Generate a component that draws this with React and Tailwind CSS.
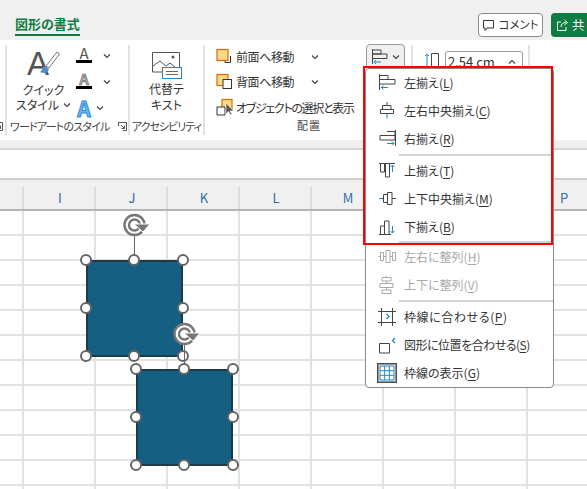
const FONT = "font-['Noto_Sans_CJK_JP','Liberation_Sans',sans-serif] [font-feature-settings:'palt']";
const D = "#444";
const B = "#1f88d0";

function Chev({ className = "" }) {
  return (
    <svg width="8" height="6" viewBox="0 0 8 6" className={className} fill="none" stroke="#444" strokeWidth="1.2">
      <path d="M1 1.5 4 4.5 7 1.5" />
    </svg>
  );
}

function Ico({ children }) {
  return (
    <svg width="20" height="20" viewBox="0 0 20 20" fill="none" stroke={D} strokeWidth="1" className="shrink-0">
      {children}
    </svg>
  );
}

const icons = {
  left: (
    <Ico>
      <path d="M2.500 1v16M3 2.500h8v4H3M3 6.500h15v4.500H3" />
      <path d="M4 14.500h7M6.500 12.500 4.500 14.500l2 2" stroke={B} />
    </Ico>
  ),
  center: (
    <Ico>
      <path d="M10 1v3M5.500 4.500h8.500v4H5.500zM3.500 8.500h13v4h-13z" />
      <path d="M10 13v4.500" stroke={B} />
    </Ico>
  ),
  right: (
    <Ico>
      <path d="M18.500 1v16M10 2.500h8v4h-8M3 6.500h15V11H3z" />
      <path d="M10 14.500h7M15 12.500l2 2-2 2" stroke={B} />
    </Ico>
  ),
  top: (
    <Ico>
      <path d="M2 2.500h16M3.500 3v8h4V3M8.500 3v13h4V3" />
      <path d="M15.500 11V4M13.500 6l2-2 2 2" stroke={B} />
    </Ico>
  ),
  middle: (
    <Ico>
      <path d="M5 9.500h1M10 9.500h1M15 9.500h4M6.500 5.500h4v8h-4zM10.500 3.500h4.500v12h-4.500z" />
      <path d="M2 9.500h3" stroke={B} />
    </Ico>
  ),
  bottom: (
    <Ico>
      <path d="M2 17.500h12M3.500 17v-8h4v8M7.500 17V4h4.500v13" />
      <path d="M15.500 9v7M13.500 14l2 2 2-2" stroke={B} />
    </Ico>
  ),
  distH: (
    <Ico>
      <g stroke="#a8a8a8">
        <path d="M3.500 5.500h3v8h-3zM9 3.500h4v12H9zM15.500 5.500h3v8h-3zM1.500 9.500h2M6.500 9.500H9M13 9.500h2.500" />
      </g>
    </Ico>
  ),
  distV: (
    <Ico>
      <g stroke="#a8a8a8">
        <path d="M5 2.500h9v3.500H5zM3 8.500h13v4H3zM5 15h9v3.500H5zM9.500 1v1.500M9.500 6v2.500M9.500 12.500V15" />
      </g>
    </Ico>
  ),
  snapGrid: (
    <Ico>
      <path d="M4.500 1v18M15.500 1v18M1 4.500h18M1 15.500h18" />
      <path d="M9.500 7l2.500 2.500L9.500 12" stroke={B} strokeWidth="1.3" />
    </Ico>
  ),
  snapShape: (
    <Ico>
      <path d="M2.500 8.500h10v9.500h-10z" />
      <path d="M18 3l-2.500 2.500L18 8" stroke={B} strokeWidth="1.3" />
    </Ico>
  ),
  grid: (
    <svg width="20" height="20" viewBox="0 0 20 20" fill="none" className="shrink-0">
      <rect x="0.500" y="0.500" width="19" height="19" fill="#fff" stroke="#444" />
      <rect x="1.500" y="1.500" width="17" height="17" stroke="#999" strokeWidth="1.2" />
      <path d="M3 3h14v14H3zM3 7.700h14M3 12.300h14M7.700 3v14M12.300 3v14" stroke={B} />
    </svg>
  ),
};

function Item({ icon, label, k, disabled, track = "" }) {
  return (
    <div className={`flex items-center h-[28px] pl-[11px] gap-[7px] text-[12px] whitespace-nowrap ${disabled ? "text-[#a9a9a9]" : "text-[#333]"}`}>
      {icons[icon]}
      <span className={track}>
        {label}(<span className="underline underline-offset-2">{k}</span>)
      </span>
    </div>
  );
}

function Sep() {
  return <div className="ml-[33px] h-[2px] bg-[#d4d4d4]" />;
}

function Handle({ className }) {
  return <div className={`absolute w-[12px] h-[12px] -ml-[6px] -mt-[6px] rounded-full bg-white border-2 border-[#666] ${className}`} />;
}

function Rotate({ className }) {
  return (
    <svg className={`absolute ${className}`} width="28" height="24" viewBox="0 0 28 24" fill="none">
      <circle cx="11.500" cy="12" r="10" fill="#fff" stroke="#777" strokeWidth="2.400" />
      <circle cx="11.500" cy="12" r="5.500" fill="#fff" stroke="#777" strokeWidth="2.400" />
      <path d="M11 11h16l-7 8z" fill="#777" stroke="#fff" strokeWidth="1" />
    </svg>
  );
}

function Shape({ className, rotate }) {
  return (
    <div className={`absolute w-[97px] h-[97px] ${className}`}>
      <div className="absolute left-[48px] -top-[26px] w-px h-[26px] bg-[#666]" />
      {rotate}
      <div className="absolute inset-0 bg-[#156082] border-2 border-[#1c3a48]" />
      <Handle className="left-0 top-0" />
      <Handle className="left-[48px] top-0" />
      <Handle className="left-[97px] top-0" />
      <Handle className="left-0 top-[48px]" />
      <Handle className="left-[97px] top-[48px]" />
      <Handle className="left-0 top-[96px]" />
      <Handle className="left-[48px] top-[96px]" />
      <Handle className="left-[97px] top-[96px]" />
    </div>
  );
}

function GroupLabel({ children, className = "" }) {
  return <div className={`h-[18px] text-[11px] leading-[18px] text-[#444] whitespace-nowrap ${className}`}>{children}</div>;
}

function Launcher({ className = "" }) {
  return (
    <svg width="9" height="9" viewBox="0 0 9 9" fill="none" stroke="#555" className={className}>
      <path d="M.5 4V.5H8.500V8.500H5M3 3l3.500 3.500M6.500 3.500v3h-3" />
    </svg>
  );
}

function ArrangeRow({ icon, label, chev, track }) {
  return (
    <div className="flex items-center h-[25.500px] gap-[3px] text-[12px] text-[#333] whitespace-nowrap">
      <svg width="17" height="20" viewBox="0 0 17 20" fill="none" className="shrink-0">{icon}</svg>
      <span className={track}>{label}</span>
      {chev && <Chev className="ml-[14px]" />}
    </div>
  );
}

const cols = ["", "I", "J", "K", "L", "M", "", "", "P"];

export default function App() {
  return (
    <div className={`relative w-[587px] h-[489px] overflow-hidden bg-[#f0f0f0] text-[#333] ${FONT}`}>
      {/* title row */}
      <div className="flex h-[40px] pl-[15px]">
        <div className="mt-[14px] h-[22px] border-b-2 border-[#107c41] text-[13px] font-bold leading-[19px] text-[#107c41] whitespace-nowrap">図形の書式</div>
        <div className="ml-auto flex gap-[8px] pt-[13px]">
          <div className="flex items-center justify-center gap-[3px] w-[65px] h-[24px] rounded-[4px] border border-[#8a8a8a] bg-white text-[11.500px]">
            <svg width="13" height="13" viewBox="0 0 13 13" fill="none" stroke="#333">
              <path d="M1.500 1.500h10v7.500H5L3 11.500V9H1.500z" />
            </svg>
            コメント
          </div>
          <div className="flex items-center gap-[3px] w-[36px] h-[24px] pl-[5px] rounded-l-[4px] bg-[#107c41] text-white text-[12.500px]">
            <svg width="13" height="13" viewBox="0 0 13 13" fill="none" stroke="#fff">
              <path d="M5 3H1.500v8.500h8.500V8M5 8c0-3 2-4.500 5-4.500M8.500 1l3 2.500-3 2.500" />
            </svg>
            共
          </div>
        </div>
      </div>

      {/* ribbon */}
      <div className="flex h-[100px] bg-white pt-[5px]">
        <div className="w-[7px] h-[90px] border-r-2 border-[#e2e2e2] flex flex-col justify-end">
          <Launcher className="-ml-[6px] mb-[4px]" />
        </div>

        <div className="w-[123px] h-[90px] border-r-2 border-[#e2e2e2] flex flex-col">
          <div className="flex h-[72px]">
            <div className="w-[69px] flex flex-col items-center pl-[4px]">
              <svg width="36" height="36" viewBox="0 0 36 36" className="shrink-0 mb-[1px]" fill="none">
                <text x="1" y="30" fontFamily="Liberation Sans" fontSize="33" fill="#555">A</text>
                <path d="M31 7 33.500 9 23 23l-3-2z" fill="#fff" stroke="#777" />
                <path d="M19 21c-3 1-2 4-5 6 4 2 8 1 9-3z" fill="#4a90d0" />
              </svg>
              <div className="text-[12px] leading-[15px] text-center whitespace-nowrap">クイック</div>
              <div className="flex items-center gap-[4px] text-[12px] leading-[15px] whitespace-nowrap">スタイル <Chev /></div>
            </div>
            <div className="flex flex-col -mt-[2px]">
              <div className="flex items-center shrink-0 h-[26px] gap-[11px]">
                <div className="flex flex-col items-center w-[16px] pb-[4px] text-[15px] leading-[15px] text-[#555]">A<div className="w-[16px] h-[3px] bg-black" /></div>
                <Chev />
              </div>
              <div className="flex items-center shrink-0 h-[26px] gap-[11px]">
                <div className="flex flex-col items-center w-[16px] pb-[4px] text-[15px] leading-[15px] text-[#aaa] font-bold [-webkit-text-stroke:0.5px_#555]">A<div className="w-[16px] h-[3px] bg-black" /></div>
                <Chev />
              </div>
              <div className="flex items-center shrink-0 h-[26px] gap-[4px]">
                <div className="w-[16px] text-center text-[21px] font-bold leading-[20px] text-[#6ab4ee] [-webkit-text-stroke:1px_#2f8fdc]">A</div>
                <Chev />
              </div>
            </div>
          </div>
          <div className="flex items-center pl-[3px]">
            <GroupLabel className="tracking-[-0.8px]">ワードアートのスタイル</GroupLabel>
            <Launcher className="ml-[8px]" />
          </div>
        </div>

        <div className="w-[75px] h-[90px] border-r-2 border-[#e2e2e2] flex flex-col items-center">
          <div className="h-[72px] flex flex-col items-center">
            <svg width="32" height="30" viewBox="0 0 32 30" fill="none" className="mt-[6px] shrink-0">
              <path d="M18 21H1.500V1.500h27V16" stroke="#555" />
              <path d="M2 15l7-5 6 5 4-3 5 4" stroke="#555" />
              <circle cx="22" cy="6" r="1.500" fill="#555" />
              <rect x="11.500" y="16.500" width="19" height="11" fill="#fff" stroke={B} />
              <path d="M15 20.500h12M15 23.500h12" stroke="#666" />
            </svg>
            <div className="text-[12px] leading-[16px] whitespace-nowrap">代替テ</div>
            <div className="text-[12px] leading-[16px] whitespace-nowrap">キスト</div>
          </div>
          <GroupLabel className="tracking-[-1px]">アクセシビリティ</GroupLabel>
        </div>

        <div className="w-[208px] h-[90px] border-r-2 border-[#e2e2e2] flex">
          <div className="w-[152px] pl-[11px] flex flex-col">
            <div className="h-[72px] -mt-[1px] whitespace-nowrap">
              <ArrangeRow
                chev
                track="tracking-[-0.4px]"
                label="前面へ移動"
                icon={
                  <>
                    <path d="M14.500 9v6.500H9v-2" stroke="#333" />
                    <rect x="1" y="2.500" width="11" height="11" fill="#fbd98a" stroke="#d96c00" strokeWidth="1.200" />
                  </>
                }
              />
              <ArrangeRow
                chev
                track="tracking-[-0.4px]"
                label="背面へ移動"
                icon={
                  <>
                    <rect x="1" y="2.500" width="11" height="11" fill="#fbd98a" stroke="#d96c00" strokeWidth="1.200" />
                    <rect x="7" y="7.500" width="8.500" height="9" fill="#f8f8f8" stroke="#333" />
                  </>
                }
              />
              <ArrangeRow
                track="tracking-[-1.300px]"
                label="オブジェクトの選択と表示"
                icon={
                  <>
                    <rect x="6" y="1.500" width="10" height="10" fill="#fbd98a" stroke="#d96c00" strokeWidth="1.200" />
                    <path d="M9 9H1v8h8z" fill="#fff" stroke="#333" />
                    <path d="M10 5v11l2.500-2.500 2 3.500 1.500-1-2-3h3.500z" fill="#555" stroke="#fff" strokeWidth=".6" />
                  </>
                }
              />
            </div>
            <GroupLabel className="pl-[81px] tracking-[1px]">配置</GroupLabel>
          </div>
          <div className="pl-[9px] -mt-[1px]">
            <div className="flex items-center justify-center gap-[3px] w-[39px] h-[25px] rounded-[4px] border border-[#999] bg-[#f0f0f0]">
              <svg width="18" height="18" viewBox="0 0 18 18" fill="none" stroke="#444" className="shrink-0">
                <path d="M1.500 1v15M2 2h8v4H2M2 6h14v4.500H2" />
                <path d="M3 14h7M5 12l-2 2 2 2" stroke={B} />
              </svg>
              <Chev />
            </div>
          </div>
        </div>

        <div className="w-[117px] h-[90px] border-r-2 border-[#e2e2e2] flex items-start gap-[2px] pl-[10px] pt-[6px]">
          <svg width="20" height="20" viewBox="0 0 20 20" fill="none" className="shrink-0">
            <path d="M4 18V3M2 5l2-2 2 2" stroke={B} />
            <path d="M8.500 2.500h7M15.500 2.500V18M8.500 2.500V18" stroke="#444" />
          </svg>
          <div className="flex items-center justify-between w-[78px] h-[22px] pl-[2px] pr-[6px] rounded-[3px] border border-[#999] text-[13px] text-[#333]">
            2.54 cm
            <Chev className="rotate-180" />
          </div>
        </div>
      </div>

      {/* gray strip + formula bar */}
      <div className="h-[10px] border-b-2 border-[#d6d6d6]" />
      <div className="h-[30px] bg-white border-b-2 border-[#d0d0d0]" />

      {/* column header */}
      <div className="h-[31px] flex items-end border-b-2 border-[#b5b5b5] bg-[#f0f0f0]">
        {cols.map((c, i) => (
          <div
            key={i}
            className={`shrink-0 h-[22px] border-r-2 border-[#dcdcdc] pl-[2px] flex items-center justify-center text-[13px] text-[#2f6ea5] ${i === 0 ? "w-[24px]" : "w-[72px]"}`}
          >
            {c}
          </div>
        ))}
      </div>

      {/* sheet */}
      <div className="grid grid-cols-[24px_repeat(8,72px)] auto-rows-[25px] bg-white h-[279px]">
        {Array.from({ length: 108 }).map((_, i) => (
          <div key={i} className="border-r-2 border-b-2 border-[#e2e2e2]" />
        ))}
      </div>

      {/* shapes */}
      <Shape className="left-[86px] top-[260px]" rotate={<Rotate className="left-[37px] -top-[47px]" />} />
      <Shape className="left-[136px] top-[369px]" rotate={<Rotate className="left-[37px] -top-[47px]" />} />

      {/* menu */}
      <div className="absolute left-[365px] top-[68px] w-[189px] h-[320px] rounded-[4px] border border-[#8a8a8a] bg-white">
        <Item icon="left" label="左揃え" k="L" />
        <Item icon="center" label="左右中央揃え" k="C" />
        <Item icon="right" label="右揃え" k="R" />
        <div className="h-[1px]" />
        <Sep />
        <div className="h-[1px]" />
        <Item icon="top" label="上揃え" k="T" />
        <Item icon="middle" label="上下中央揃え" k="M" />
        <Item icon="bottom" label="下揃え" k="B" />
        <Sep />
        <Item icon="distH" label="左右に整列" k="H" disabled />
        <Item icon="distV" label="上下に整列" k="V" disabled />
        <div className="h-[1px]" />
        <Sep />
        <div className="h-[1px]" />
        <Item icon="snapGrid" label="枠線に合わせる" k="P" track="tracking-[0.6px]" />
        <Item icon="snapShape" label="図形に位置を合わせる" k="S" track="tracking-[-0.5px]" />
        <Item icon="grid" label="枠線の表示" k="G" />
      </div>

      {/* annotation */}
      <div className="absolute left-[363px] top-[66px] w-[190px] h-[179px] border-[2.500px] border-[#ff0000]" />
    </div>
  );
}
